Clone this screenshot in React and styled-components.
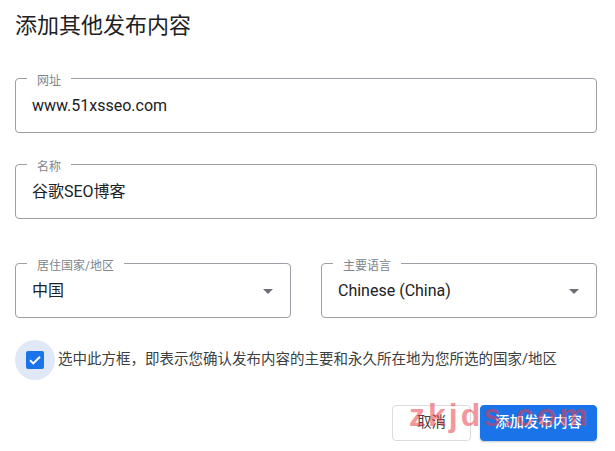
import React from "react";
import styled, { createGlobalStyle } from "styled-components";

const Global = createGlobalStyle`
  html, body { margin: 0; padding: 0; background: #ffffff; }
  body {
    font-family: Roboto, "Noto Sans CJK SC", "Noto Sans", sans-serif;
    color: #202124;
    -webkit-font-smoothing: antialiased;
  }
  * { box-sizing: border-box; }
`;

const Page = styled.div`
  position: relative;
  width: 615px;
  height: 451px;
  padding: 12px 18px 0 15px;
  overflow: hidden;
`;

const Title = styled.h1`
  margin: 0;
  font-size: 22px;
  line-height: 28px;
  font-weight: 400;
  color: #202124;
`;

const Field = styled.fieldset`
  margin: ${(p) => p.$top}px 0 0;
  padding: 0 16px 16px;
  border: 1px solid #9aa0a6;
  border-radius: 4px;
  min-width: 0;
`;

const Label = styled.legend`
  margin-left: -5px;
  padding: 6px 10px 0;
  font-size: 12px;
  line-height: 14px;
  color: #80868b;
`;

const Value = styled.div`
  margin-top: 8px;
  font-size: 16px;
  line-height: 20px;
  color: #202124;
`;

const SelectInner = styled.div`
  margin-top: 8px;
  display: flex;
  align-items: center;
  justify-content: space-between;
  font-size: 16px;
  line-height: 20px;
  color: #202124;
  padding-right: 1px;
`;

const SelectRow = styled.div`
  display: grid;
  grid-template-columns: 1fr 1fr;
  column-gap: 30px;
  margin-top: 34px;
`;

const CheckRow = styled.div`
  display: flex;
  align-items: center;
  margin-top: 22px;
  height: 40px;
`;

const Halo = styled.div`
  width: 40px;
  height: 40px;
  border-radius: 50%;
  background: #dfe8f7;
  display: flex;
  align-items: center;
  justify-content: center;
  flex-shrink: 0;
`;

const Box = styled.div`
  width: 18px;
  height: 18px;
  border-radius: 2px;
  background: #1a73e8;
  display: flex;
  align-items: center;
  justify-content: center;
`;

const CheckText = styled.span`
  margin-left: 3px;
  font-size: 14.5px;
  line-height: 20px;
  color: #3c4043;
  white-space: nowrap;
`;

const Actions = styled.div`
  display: flex;
  justify-content: flex-end;
  gap: 9px;
  margin-top: 25px;
`;

const Button = styled.button`
  width: ${(p) => (p.$primary ? 117 : 79)}px;
  height: 36px;
  padding: 0;
  border-radius: 4px;
  font-family: Roboto, "Noto Sans CJK SC", sans-serif;
  font-size: 14.5px;
  line-height: 20px;
  font-weight: ${(p) => (p.$primary ? 500 : 400)};
  border: 1px solid ${(p) => (p.$primary ? "#1a73e8" : "#dadce0")};
  background: ${(p) => (p.$primary ? "#1a73e8" : "#ffffff")};
  color: ${(p) => (p.$primary ? "#ffffff" : "#3c4043")};
  box-shadow: ${(p) => (p.$primary ? "0 1px 2px rgba(60,64,67,0.3)" : "none")};
  cursor: pointer;
`;

const Watermark = styled.div`
  position: absolute;
  left: 409px;
  top: 399px;
  font-family: "Liberation Sans", Arial, sans-serif;
  font-weight: 700;
  font-size: 32px;
  line-height: 1;
  letter-spacing: 3px;
  color: rgba(232, 60, 72, 0.55);
  pointer-events: none;
  white-space: nowrap;
`;

const Arrow = () => (
  <svg width="10" height="5" viewBox="0 0 10 5" aria-hidden="true">
    <path d="M0 0 L10 0 L5 5 Z" fill="#6b6f74" />
  </svg>
);

const Check = () => (
  <svg width="14" height="14" viewBox="0 0 14 14" aria-hidden="true">
    <path d="M2 7.2 L5.3 10.4 L12 3.8" fill="none" stroke="#ffffff" strokeWidth="2" />
  </svg>
);

function TextField({ label, value, top }) {
  return (
    <Field $top={top}>
      <Label>{label}</Label>
      <Value>{value}</Value>
    </Field>
  );
}

function SelectField({ label, value }) {
  return (
    <Field $top={0}>
      <Label>{label}</Label>
      <SelectInner>
        <span>{value}</span>
        <Arrow />
      </SelectInner>
    </Field>
  );
}

export default function App() {
  return (
    <>
      <Global />
      <Page>
        <Title>添加其他发布内容</Title>
        <TextField label="网址" value="www.51xsseo.com" top={28} />
        <TextField label="名称" value="谷歌SEO博客" top={21} />
        <SelectRow>
          <SelectField label="居住国家/地区" value="中国" />
          <SelectField label="主要语言" value="Chinese (China)" />
        </SelectRow>
        <CheckRow>
          <Halo>
            <Box>
              <Check />
            </Box>
          </Halo>
          <CheckText>选中此方框，即表示您确认发布内容的主要和永久所在地为您所选的国家/地区</CheckText>
        </CheckRow>
        <Actions>
          <Button>取消</Button>
          <Button $primary>添加发布内容</Button>
        </Actions>
        <Watermark>zkjds.com</Watermark>
      </Page>
    </>
  );
}
